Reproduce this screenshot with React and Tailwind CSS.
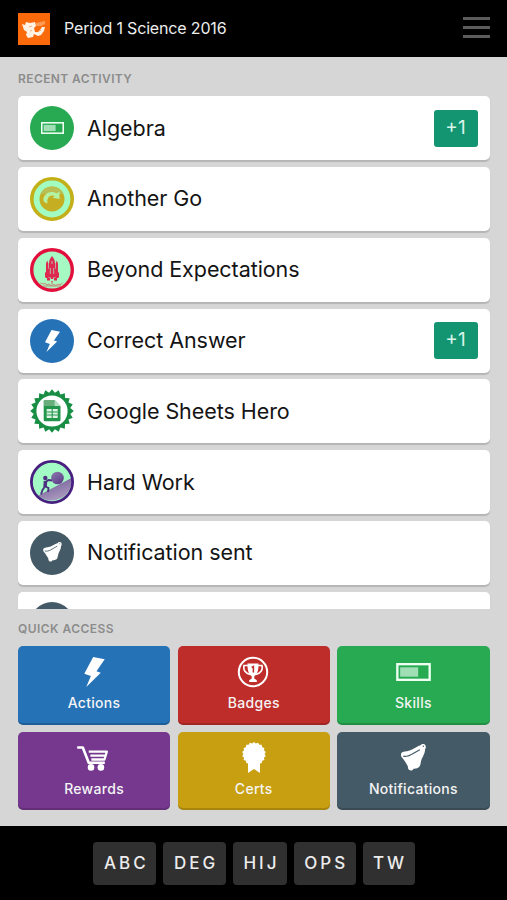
import clsx from 'clsx'

const points = (n, cx, cy, outer, inner) =>
  Array.from({ length: n * 2 }, (_, i) => {
    const r = i % 2 ? inner : outer
    const a = (Math.PI * i) / n - Math.PI / 2
    return `${(cx + r * Math.cos(a)).toFixed(2)},${(cy + r * Math.sin(a)).toFixed(2)}`
  }).join(' ')

function Bolt({ className }) {
  return (
    <svg className={className} viewBox="0 0 62 91" fill="white">
      <path d="M27 0L62 7L37 43L50 48L6 91L20 58L0 51Z" />
    </svg>
  )
}

function Meter({ className }) {
  return (
    <svg className={className} viewBox="0 0 104 54">
      <rect x="3.5" y="3.5" width="97" height="47" fill="none" stroke="#effff4" strokeWidth="7" />
      <rect x="12" y="13" width="54" height="28" fill="#a0dfb6" />
    </svg>
  )
}

function Bell({ className }) {
  return (
    <svg className={className} viewBox="0 0 76 82">
      <path
        d="M0 33C-1 25 7 23 18 22C36 19 46 8 60 4C61 0 69-2 73 2C77 7 76 12 73 16C74 31 62 42 60 57C59 65 57 70 50 73C46 75 42 75 38 75C36 81 29 82 24 78C20 75 22 70 20 66C14 56 10 49 4 42C1 40 0 37 0 33Z"
        fill="white"
      />
      <path d="M8 37C22 42 37 27 56 18" fill="none" stroke="#445a66" strokeWidth="3.5" strokeLinecap="round" />
      <circle cx="68" cy="7" r="2.2" fill="#445a66" />
    </svg>
  )
}

function Trophy({ className }) {
  return (
    <svg className={className} viewBox="0 0 32 32" fill="none" stroke="white">
      <circle cx="16" cy="16" r="14.2" strokeWidth="2" />
      <path d="M11 9.5H7C6 14 8.500 17.500 13 18.500M21 9.5h4C26 14 23.500 17.500 19 18.500" strokeWidth="1.6" />
      <path
        d="M10.500 7.500H21.500C21.700 13.500 20.500 18.500 17.300 20.300V22.500L19.800 24.300V26H12.200V24.300L14.700 22.500V20.300C11.500 18.500 10.300 13.500 10.500 7.500Z"
        fill="white"
        stroke="none"
      />
      <path d="M14.700 11.500L16.400 10.500V16.500" stroke="#bf2d2a" strokeWidth="1.500" />
    </svg>
  )
}

function Cart({ className }) {
  return (
    <svg className={className} viewBox="0 0 96 76" fill="none" stroke="white" strokeWidth="8" strokeLinejoin="round">
      <path d="M0 4.500H17L35 51H84" />
      <path d="M35 17H90L83 41H43M40 29H84" strokeWidth="7" />
      <circle cx="42" cy="65" r="10" fill="white" stroke="none" />
      <circle cx="72" cy="65" r="10" fill="white" stroke="none" />
    </svg>
  )
}

function Rosette({ className }) {
  return (
    <svg className={className} viewBox="0 0 24 31" fill="white">
      <polygon points={points(18, 12, 12, 12, 10.6)} />
      <path d="M6 19V31L12 27L18 31V19Z" />
    </svg>
  )
}

function Disc({ className, children }) {
  return <div className={clsx('flex size-11 items-center justify-center rounded-full', className)}>{children}</div>
}

const SkillIcon = () => (
  <Disc className="bg-[#28aa52]"><Meter className="h-3 w-[23px]" /></Disc>
)

const ActionIcon = () => (
  <Disc className="bg-[#2672b7]"><Bolt className="h-[22px] w-[15px]" /></Disc>
)

const NotifyIcon = () => (
  <Disc className="bg-[#445a66]"><Bell className="mb-0.5 h-5 w-[19px]" /></Disc>
)

function RetryIcon() {
  return (
    <svg className="size-11" viewBox="0 0 44 44">
      <circle cx="22" cy="22" r="20.200" fill="#a2fbc0" stroke="#c3b019" strokeWidth="3.600" />
      <circle cx="22" cy="22" r="12.500" fill="#c5ae22" />
      <path d="M10.500 17A12.500 12.500 0 0 1 33.500 17Z" fill="#b9bf52" />
      <path
        d="M13.300 22C14.500 16 21 13 26.500 16.500L29.500 14.500V22L22.500 20.700L24.700 19C20 17 16.500 21 17.500 26.500C14.500 25.500 12.900 24 13.300 22Z"
        fill="#b5f3a4"
      />
    </svg>
  )
}

function RocketIcon() {
  return (
    <svg className="size-11" viewBox="0 0 44 44">
      <circle cx="22" cy="22" r="20.300" fill="#a6f9c3" stroke="#e20f3d" strokeWidth="3.400" />
      <g fill="#df2850">
        <path d="M22 8C24.300 10.500 25 13 25 16V29H19V16C19 13 19.700 10.500 22 8Z" />
        <path d="M16 15.500L17.200 12.500L18.400 15.500V30H16ZM25.600 15.500L26.800 12.500L28 15.500V30H25.600Z" />
        <path d="M19 20L15 25V29.500H29V25L25 20ZM17 30H20V32.500H17ZM24 30H27V32.500H24ZM20.800 29.500H23.200V31H20.800Z" />
      </g>
      <path d="M22 13V16M20.300 20V26M23.700 20V26" stroke="#a6f9c3" strokeWidth=".7" />
      <path d="M21 33.500H23M22 34V36" stroke="#cf6a72" strokeWidth="1" />
      <path d="M10.500 35L13 36L15 35.500L17 37L19 36L21 37.500L24 36.500L26 37.500L28 36L30 37L32.500 35M13 38H31" fill="none" stroke="#cf6a66" strokeWidth=".8" />
    </svg>
  )
}

function SheetsIcon() {
  return (
    <svg className="size-11" viewBox="0 0 44 44">
      <polygon points={points(20, 22, 22, 21.800, 18.500)} fill="#178e43" />
      <circle cx="22" cy="22" r="15.600" fill="white" />
      <path d="M15 11H24.500L30.500 17V31Q30.500 32.300 29.200 32.300H15Q13.700 32.300 13.700 31V12.300Q13.700 11 15 11Z" fill="#23964e" />
      <path d="M14 11H24.500V17H14Z" fill="#69ad7c" />
      <path d="M24.500 11V17H30.500Z" fill="#b5dfc4" />
      <path d="M16.700 20H27.700V29H16.700Z" fill="#dff3e5" />
      <path d="M16.700 23H27.700M16.700 26H27.700M22.200 20V29" stroke="#23964e" strokeWidth="1.100" />
    </svg>
  )
}

function BoulderIcon() {
  return (
    <svg className="size-11" viewBox="0 0 44 44">
      <defs>
        <linearGradient id="hill" x1="0" y1="0" x2="0.500" y2="1">
          <stop offset="0" stopColor="#6b5096" />
          <stop offset="1" stopColor="#a999bd" />
        </linearGradient>
        <linearGradient id="rock" x1="0" y1="0" x2="0.600" y2="1">
          <stop offset="0" stopColor="#8d79ac" />
          <stop offset="1" stopColor="#61418d" />
        </linearGradient>
      </defs>
      <circle cx="22" cy="22" r="20.500" fill="#a2fbc5" />
      <path d="M8.500 35.500L41.500 18A20 20 0 0 1 8.500 35.500Z" fill="url(#hill)" />
      <circle cx="27.500" cy="18" r="6.300" fill="url(#rock)" />
      <circle cx="15.300" cy="18" r="2.200" fill="#4d3180" />
      <path d="M15.500 21L15 27" fill="none" stroke="#4d3180" strokeWidth="3.500" />
      <path d="M15.500 22L18.500 20L22 20.500M15 26.500L12.500 30L11 34.500M15.500 26.500L18.500 28L18 32" fill="none" stroke="#4d3180" strokeWidth="1.900" />
      <circle cx="22" cy="22" r="20.600" fill="none" stroke="#482080" strokeWidth="2.800" />
    </svg>
  )
}

function LogoIcon() {
  return (
    <svg className="size-8" viewBox="0 0 32 32">
      <rect width="32" height="32" fill="#fb6a0a" />
      <path d="M4 11L7 12L8 9L12 10L17 9L18 13L16 15L17 19L20 19L22 17L24 14L27 14L26 18L23 22L20 23L16 21L15 24L10 25L8 22L9 19L6 17Z" fill="#fff1e4" />
      <path d="M11 14L14 13M12 18L14 17.500M20 19L23 17" stroke="#fdb27d" strokeWidth="1" />
      <path d="M18 10L27 8V11L23 13L18 13Z" fill="#fd9c54" />
    </svg>
  )
}

const activity = [
  { name: 'Algebra', icon: SkillIcon, points: '+1' },
  { name: 'Another Go', icon: RetryIcon },
  { name: 'Beyond Expectations', icon: RocketIcon },
  { name: 'Correct Answer', icon: ActionIcon, points: '+1' },
  { name: 'Google Sheets Hero', icon: SheetsIcon },
  { name: 'Hard Work', icon: BoulderIcon },
  { name: 'Notification sent', icon: NotifyIcon },
  { name: '', icon: NotifyIcon },
]

const tiles = [
  { name: 'Actions', color: 'bg-[#2672b7]', icon: <Bolt className="h-[30px] w-[21px]" /> },
  { name: 'Badges', color: 'bg-[#bf2d2a]', icon: <Trophy className="mr-px size-8" /> },
  { name: 'Skills', color: 'bg-[#28aa52]', icon: <Meter className="h-[18px] w-[35px]" /> },
  { name: 'Rewards', color: 'bg-[#76388f]', icon: <Cart className="mt-0.5 mr-0.5 h-[25px] w-8" /> },
  { name: 'Certs', color: 'bg-[#c89f10]', icon: <Rosette className="h-[31px] w-6" /> },
  { name: 'Notifications', color: 'bg-[#445a66]', icon: <Bell className="h-[27px] w-[25px]" /> },
]

const groups = [
  { label: 'ABC', width: 'w-[63px]' },
  { label: 'DEG', width: 'w-[63px]' },
  { label: 'HIJ', width: 'w-[54px]' },
  { label: 'OPS', width: 'w-[62px]' },
  { label: 'TW', width: 'w-[52px]' },
]

export default function App() {
  return (
    <div className="flex h-[900px] w-[507px] flex-col overflow-hidden bg-[#d6d6d6] font-['Inter',sans-serif]">
      <header className="flex h-[57px] shrink-0 items-center bg-black pr-[17px] pl-[18px]">
        <LogoIcon />
        <h1 className="ml-3.5 pb-0.5 text-[16px] tracking-[-0.16px] text-[#ededed]">Period 1 Science 2016</h1>
        <div className="ml-auto flex w-[27px] flex-col gap-[5.500px] pb-0.5">
          <span className="h-[3.500px] bg-[#5c5c5c]" />
          <span className="h-[3.500px] bg-[#5c5c5c]" />
          <span className="h-[3.500px] bg-[#5c5c5c]" />
        </div>
      </header>

      {/* Recent activity */}
      <section className="h-[552px] shrink-0 overflow-hidden pr-[17.500px] pl-[18px]">
        <h2 className="flex h-[39.300px] items-center pt-1 text-[12px] font-semibold tracking-[0.4px] text-[#8c8c8c]">
          RECENT ACTIVITY
        </h2>
        <div className="flex flex-col gap-[6.8px]">
          {activity.map((a, i) => (
            <div key={i} className="flex h-16 shrink-0 items-center rounded-[5px] bg-white pr-3 pl-3 shadow-[0_1.5px_1px_#b5b5b5]">
              <a.icon />
              <span className="ml-[13px] pb-px text-[21.5px] tracking-[-0.06px] text-[#141414]">{a.name}</span>
              {a.points && (
                <span className="ml-auto flex h-[37px] w-11 items-center justify-center rounded-[3px] bg-[#149572] text-[19px] text-[#d9f5e9]">
                  {a.points}
                </span>
              )}
            </div>
          ))}
        </div>
      </section>

      {/* Quick access */}
      <section className="h-[217px] shrink-0 pr-[17.500px] pl-[18px]">
        <h2 className="flex h-[37px] items-center pt-0.5 text-[12px] font-semibold tracking-[0.45px] text-[#8c8c8c]">
          QUICK ACCESS
        </h2>
        <div className="grid grid-cols-3 gap-x-[7.5px] gap-y-[7px]">
          {tiles.map(t => (
            <div
              key={t.name}
              className={clsx('flex h-[78.500px] flex-col items-center rounded-[5px] pt-2.5 shadow-[inset_0_-2px_0_rgba(0,0,0,0.16)]', t.color)}
            >
              <div className="flex h-8 items-center">{t.icon}</div>
              <span className="mt-[5px] text-[14px] leading-5 font-medium tracking-[0.3px] text-[#f4f4f4]">{t.name}</span>
            </div>
          ))}
        </div>
      </section>

      <footer className="flex flex-1 justify-center gap-[6.800px] bg-black pt-4 pl-px">
        {groups.map(g => (
          <span
            key={g.label}
            className={clsx('flex h-[43px] items-center justify-center rounded-[4px] bg-[#303030] pl-[3px] text-[17px] font-medium tracking-[3px] text-[#ececec]', g.width)}
          >
            {g.label}
          </span>
        ))}
      </footer>
    </div>
  )
}
